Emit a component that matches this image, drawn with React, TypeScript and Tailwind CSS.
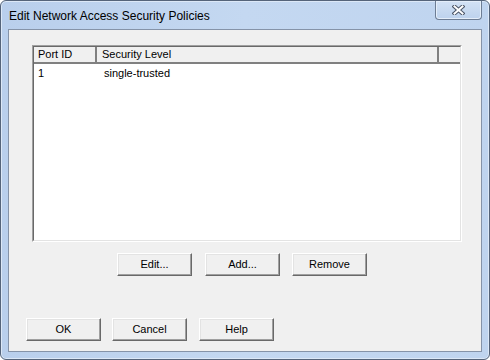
const font = { fontFamily: '"Liberation Sans", Arial, sans-serif' };

const Button = ({ label, className = "" }: { label: string; className?: string }) => (
  <div
    className={`flex h-[23px] w-[75px] items-center justify-center border border-t-white border-l-white border-r-[#696969] border-b-[#696969] bg-[#f0f0f0] text-[11px] text-black shadow-[inset_-1px_-1px_0_#a0a0a0,inset_1px_1px_0_#e3e3e3] ${className}`}
  >
    {label}
  </div>
);

const CloseButton = () => (
  <div className="absolute right-[7px] top-0 flex h-[19px] w-[47px] items-center justify-center rounded-b-[4px] border border-t-0 border-[#6d7d94] bg-gradient-to-b from-[#d3e2f5] to-[#bdd2ed] shadow-[inset_0_0_0_1px_#e4eefa]">
    <svg width="13" height="10" viewBox="0 0 13 10">
      <path d="M2.5 1.5 L10.5 8.5 M10.5 1.5 L2.5 8.5" stroke="#4a5466" strokeWidth="4" strokeLinecap="square" />
      <path d="M2.5 1.5 L10.5 8.5 M10.5 1.5 L2.5 8.5" stroke="#ffffff" strokeWidth="2" strokeLinecap="square" />
    </svg>
  </div>
);

export default function App() {
  return (
    <div className="h-[360px] w-[490px] overflow-hidden bg-white" style={font}>
      <div className="relative flex h-[360px] w-[490px] flex-col rounded-[6px] border border-[#55647a] bg-gradient-to-r from-[#b9cfec] via-[#c4d8f1] to-[#bfd4ef] px-[7px] pb-[7px] shadow-[inset_0_0_0_1px_#dce8f7]">
        {/* TITLE BAR */}
        <div className="flex h-[28px] shrink-0 items-center pl-[1px] pt-[2px] text-[12px] text-black">
          Edit Network Access Security Policies
        </div>
        <CloseButton />

        {/* CLIENT AREA */}
        <div className="flex flex-1 flex-col border border-[#8593a8] bg-[#f0f0f0] pl-[23px] pt-[15px]">
          {/* LIST */}
          <div className="flex h-[197px] w-[430px] flex-col border border-t-[#a0a0a0] border-l-[#a0a0a0] border-r-white border-b-white">
            <div className="flex flex-1 flex-col border border-t-[#696969] border-l-[#696969] border-r-[#e3e3e3] border-b-[#e3e3e3] bg-white">
              <div className="flex h-[17px] shrink-0 border-b-2 border-[#808080] bg-[#f0f0f0] text-[11px] text-black">
                <div className="flex w-[63px] items-center border-r-2 border-[#808080] pl-[4px]">Port ID</div>
                <div className="flex w-[342px] items-center border-r-2 border-[#808080] pl-[5px]">Security Level</div>
                <div className="flex-1"></div>
              </div>
              <div className="flex h-[18px] items-center text-[11px] text-black">
                <div className="w-[65px] pl-[4px]">1</div>
                <div className="pl-[5px]">single-trusted</div>
              </div>
            </div>
          </div>

          {/* LIST BUTTONS */}
          <div className="mt-[11px] flex pl-[85px]">
            <Button label="Edit..." />
            <Button label="Add..." className="ml-[13px]" />
            <Button label="Remove" className="ml-[12px]" />
          </div>

          {/* DIALOG BUTTONS */}
          <div className="mt-[42px] flex">
            <Button label="OK" className="-ml-[6px]" />
            <Button label="Cancel" className="ml-[11px]" />
            <Button label="Help" className="ml-[12px]" />
          </div>
        </div>
      </div>
    </div>
  );
}
